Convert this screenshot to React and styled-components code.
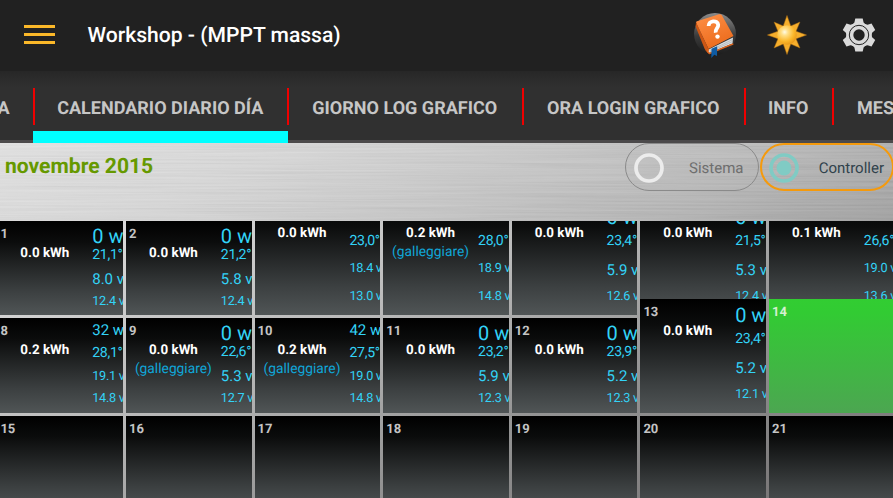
import React from "react";
import styled, { createGlobalStyle } from "styled-components";

const GlobalStyle = createGlobalStyle`
  * { box-sizing: border-box; }
  body { margin: 0; background: #303030; overflow: hidden; text-rendering: geometricPrecision; }
`;

const Screen = styled.main`
  width: 893px;
  height: 498px;
  overflow: hidden;
  display: flex;
  flex-direction: column;
  font-family: Roboto, "Liberation Sans", sans-serif;
`;

const AppBar = styled.header`
  height: 71px;
  flex: none;
  display: flex;
  align-items: center;
  padding: 0 17px 0 24px;
  background: #212121;
`;

const MenuIcon = styled.div`
  width: 31px;
  height: 19px;
  margin-top: -2px;
  display: flex;
  flex-direction: column;
  justify-content: space-between;
`;

const MenuBar = styled.span`
  height: 3px;
  background: #fbb829;
`;

const Title = styled.h1`
  margin: 1px auto 0 32.5px;
  font-size: 21.1px;
  font-weight: 500;
  line-height: 30px;
  color: #fff;
  white-space: nowrap;
`;

const Actions = styled.div`
  display: flex;
  align-items: center;
  margin-top: -1px;
`;

const Action = styled.span`
  display: flex;
  margin-left: ${(p) => p.$gap}px;
`;

const TabBar = styled.nav`
  height: 72px;
  flex: none;
  display: flex;
  border-bottom: 3px solid #4c4a4b;
  background: linear-gradient(#272727, #303030 16px);
`;

const Tab = styled.div`
  width: ${(p) => p.$width}px;
  height: 72px;
  flex: none;
  display: flex;
  flex-direction: column;
  justify-content: space-between;
  padding-top: 17px;
`;

const TabLabel = styled.div`
  height: 37px;
  display: flex;
  align-items: center;
  justify-content: ${(p) => (p.$start ? "flex-start" : p.$first ? "flex-end" : "center")};
  padding: 3px ${(p) => (p.$first ? 23.5 : 1.5)}px 0 ${(p) => (p.$start ? 23 : 0)}px;
  border-left: ${(p) => (p.$first ? "0" : "2px solid #f00000")};
  color: #c6c6c6;
  font-size: 18.05px;
  font-weight: 700;
  white-space: nowrap;
`;

const Indicator = styled.div`
  height: 12px;
  margin-right: -1px;
  background: #00ffff;
`;

const Body = styled.section`
  position: relative;
  flex: 1;
  display: flex;
  flex-direction: column;
  background: linear-gradient(158deg, #e6e6e6 0%, #dadada 18%, #bababa 44%, #929292 68%, #716e6f 100%);
`;

const Grain = styled.svg`
  position: absolute;
  inset: 0;
  width: 100%;
  height: 100%;
  opacity: 0.14;
`;

const MonthRow = styled.div`
  position: relative;
  height: 78px;
  display: flex;
  justify-content: space-between;
  align-items: flex-start;
`;

const Month = styled.h2`
  margin: 10px 0 0 5px;
  font-size: 21.1px;
  font-weight: 700;
  line-height: 28px;
  color: #669900;
`;

const Choices = styled.div`
  display: flex;
  gap: 1px;
  margin-right: -1px;
`;

const Choice = styled.label`
  width: ${(p) => (p.$on ? 134 : 134)}px;
  height: 48px;
  display: flex;
  align-items: center;
  justify-content: space-between;
  padding: 1px ${(p) => (p.$on ? 8 : 14.5)}px 0 ${(p) => (p.$on ? 6.5 : 8)}px;
  border: ${(p) => (p.$on ? "2px solid #f59a0c" : "1px solid #8a8a8a")};
  border-radius: 24px;
  color: ${(p) => (p.$on ? "#30424c" : "#6e6e6e")};
  font-size: 15px;
`;

const Calendar = styled.div`
  position: relative;
  flex: 1;
  overflow: hidden;
  margin-left: -2.6px;
  display: grid;
  grid-template-columns: repeat(7, 125.6px);
  grid-template-rows: 94px 95px 95px;
  gap: 3px;
`;

const Cell = styled.div`
  height: ${(p) => (p.$tall ? "114px" : "100%")};
  align-self: end;
  overflow: hidden;
  display: grid;
  grid-template-columns: 8px 78.8px 1fr;
  background: ${(p) =>
    p.$today
      ? "linear-gradient(#32cd32, #32cb33 12%, #4ca651)"
      : "linear-gradient(#000, #0b0c0c 22%, #3c4041 75%, #505556)"};
`;

const Day = styled.span`
  padding: 6px 0 0 3px;
  font-size: 13px;
  font-weight: 700;
  line-height: 16px;
  color: ${(p) => (p.$today ? "#d3f0cf" : "#c4c4c4")};
`;

const Energy = styled.div`
  display: flex;
  flex-direction: column;
  align-items: center;
  padding-top: 24.5px;
  font-size: 13.4px;
  font-weight: 700;
  line-height: 16px;
  color: #fff;
  white-space: nowrap;
`;

const Floating = styled.span`
  margin-top: 2.5px;
  font-size: 13.8px;
  font-weight: 400;
  color: #10a6d8;
`;

const Readings = styled.div`
  display: flex;
  flex-direction: column;
  align-items: flex-start;
  margin: 1px 0 0 8px;
  color: #33d3f7;
  white-space: nowrap;
`;

const Reading = styled.span`
  height: ${(p) => p.$h}px;
  line-height: ${(p) => p.$h}px;
  font-size: ${(p) => p.$size}px;
  letter-spacing: ${(p) => (p.$size < 14.5 ? -0.28 : 0)}px;
`;

const tabs = [
  ["CALENDARIO DIARIO DÍA", 254, true],
  ["GIORNO LOG GRAFICO", 235],
  ["ORA LOGIN GRAFICO", 222],
  ["INFO", 88],
];

const days = [
  { day: "1", energy: "0.0", watts: "0 w", temp: "21,1°", volts: "8.0 v", battery: "12.4 v" },
  { day: "2", energy: "0.0", watts: "0 w", temp: "21,2°", volts: "5.8 v", battery: "12.4 v" },
  { energy: "0.0", temp: "23,0°", volts: "18.4 v", battery: "13.0 v", tall: true },
  { energy: "0.2", temp: "28,0°", volts: "18.9 v", battery: "14.8 v", tall: true, floating: true },
  { energy: "0.0", watts: "0 w", temp: "23,4°", volts: "5.9 v", battery: "12.6 v", tall: true },
  { energy: "0.0", watts: "0 w", temp: "21,5°", volts: "5.3 v", battery: "12.4 v", tall: true },
  { energy: "0.1", temp: "26,6°", volts: "19.0 v", battery: "13.6 v", tall: true },
  { day: "8", energy: "0.2", watts: "32 w", temp: "28,1°", volts: "19.1 v", battery: "14.8 v" },
  { day: "9", energy: "0.0", watts: "0 w", temp: "22,6°", volts: "5.3 v", battery: "12.7 v", floating: true },
  { day: "10", energy: "0.2", watts: "42 w", temp: "27,5°", volts: "19.0 v", battery: "14.8 v", floating: true },
  { day: "11", energy: "0.0", watts: "0 w", temp: "23,2°", volts: "5.9 v", battery: "12.3 v" },
  { day: "12", energy: "0.0", watts: "0 w", temp: "23,9°", volts: "5.2 v", battery: "12.3 v" },
  { day: "13", energy: "0.0", watts: "0 w", temp: "23,4°", volts: "5.2 v", battery: "12.1 v", tall: true },
];

function RadioIcon({ on }) {
  const color = on ? "#80cbc4" : "#ececec";
  return (
    <svg width="30" height="30" viewBox="0 0 30 30">
      <circle cx="15" cy="15" r="13" fill="none" stroke={color} strokeWidth="3.700" />
      {on && <circle cx="15" cy="15" r="7.500" fill={color} />}
    </svg>
  );
}

function BookIcon() {
  return (
    <svg width="44" height="46" viewBox="0 0 44 46">
      <defs>
        <linearGradient id="disc" x1="0" y1="0" x2="0" y2="1">
          <stop offset="0" stopColor="#8b8b8b" />
          <stop offset="0.55" stopColor="#3a3a3a" />
          <stop offset="1" stopColor="#1d1d1d" />
        </linearGradient>
        <linearGradient id="cover" x1="0" y1="0" x2="0.4" y2="1">
          <stop offset="0" stopColor="#ff9148" />
          <stop offset="1" stopColor="#ec6c1d" />
        </linearGradient>
      </defs>
      <circle cx="22" cy="22" r="21" fill="url(#disc)" />
      <path d="M3 10.500Q3 9.500 4 9.200L26 2.300Q28 1.800 29 3.500L40.500 24 15.500 37Z" fill="url(#cover)" />
      <path d="M3 10 15.500 37 15.500 41.500Q12.500 39.500 11.500 36.500L2.600 14.500Z" fill="#cc5614" />
      <path d="M16 37.300 40 25.500 39.500 31.500 16.500 41Q14 39.500 16 37.300Z" fill="#d8dcde" />
      <path d="M17 38.600 39.700 27.500M17 39.800 39.500 29.500" stroke="#9aa0a3" strokeWidth=".5" />
      <path d="M15.800 37.200Q13.500 40 16.500 41.500L40.300 31.800" stroke="#e0651c" strokeWidth="1.400" fill="none" />
      <path d="M18.500 36.700 24.200 34.200 24 44 21.300 42.700 18.300 46Z" fill="#0e5ba3" />
      <path d="M15.600 14C15.500 8.500 24.500 7.500 25.200 12.700 25.600 16.200 21.800 16.800 22.700 20.600" stroke="#fff" strokeWidth="3.800" fill="none" />
      <circle cx="24.500" cy="24.600" r="2.200" fill="#fff" />
    </svg>
  );
}

const sunPoints = Array.from({ length: 16 }, (_, i) => {
  const a = (i * Math.PI) / 8;
  const r = i % 2 ? 9.8 : i % 4 ? 18.3 : 19.6;
  return `${(20 + r * Math.sin(a)).toFixed(2)},${(20 - r * Math.cos(a)).toFixed(2)}`;
}).join(" ");

function SunIcon() {
  return (
    <svg width="40" height="40" viewBox="0 0 40 40">
      <defs>
        <radialGradient id="sun" cx="0.38" cy="0.35" r="0.68">
          <stop offset="0" stopColor="#fffbe6" />
          <stop offset="0.25" stopColor="#ffe08a" />
          <stop offset="0.7" stopColor="#fbb72a" />
          <stop offset="1" stopColor="#e8981a" />
        </radialGradient>
      </defs>
      <polygon points={sunPoints} fill="#f5ae2c" stroke="#a86a12" strokeWidth=".5" />
      <circle cx="20" cy="20" r="9.800" fill="url(#sun)" />
    </svg>
  );
}

function GearIcon() {
  return (
    <svg width="34" height="34" viewBox="-17 -17 34 34">
      <circle r="12.500" fill="#dadada" />
      {[0, 60, 120, 180, 240, 300].map((a) => (
        <path key={a} transform={`rotate(${a})`} d="M-3.700-16.600H3.700L4.600-12.500 7-10H-7L-4.600-12.500Z" fill="#dadada" />
      ))}
      <circle r="9.700" fill="none" stroke="#242424" strokeWidth="1" />
      <circle r="5.700" fill="#212121" />
    </svg>
  );
}

function Readout({ watts, temp, volts, battery, tall }) {
  const small = watts && watts.length > 3;
  const wide = volts.length > 5;
  const rows = tall
    ? [30, 18, wide ? 38 : 40, wide ? 18 : 14]
    : [small ? 23 : 29, small ? 22 : 9, wide ? 25 : 39, wide ? 20 : 5];
  return (
    <Readings>
      <Reading $size={small ? 15 : 20} $h={rows[0]}>{watts}</Reading>
      <Reading $size={14.1} $h={rows[1]}>{temp}</Reading>
      <Reading $size={wide ? 12.7 : 15} $h={rows[2]}>{volts}</Reading>
      <Reading $size={12.7} $h={rows[3]}>{battery}</Reading>
    </Readings>
  );
}

export default function App() {
  return (
    <Screen>
      <GlobalStyle />
      <AppBar>
        <MenuIcon><MenuBar /><MenuBar /><MenuBar /></MenuIcon>
        <Title>Workshop - (MPPT massa)</Title>
        <Actions>
          <Action $gap={0}><BookIcon /></Action>
          <Action $gap={30}><SunIcon /></Action>
          <Action $gap={35}><GearIcon /></Action>
        </Actions>
      </AppBar>
      <TabBar>
        <Tab $width={33}><TabLabel $first>A</TabLabel></Tab>
        {tabs.map(([label, width, active]) => (
          <Tab key={label} $width={width}>
            <TabLabel>{label}</TabLabel>
            {active && <Indicator />}
          </Tab>
        ))}
        <Tab $width={61}><TabLabel $start>MESE</TabLabel></Tab>
      </TabBar>
      <Body>
        <Grain aria-hidden="true">
          <filter id="brushed" x="0" y="0" width="100%" height="100%">
            <feTurbulence type="fractalNoise" baseFrequency="0.006 0.55" numOctaves="2" seed="4" />
            <feColorMatrix type="saturate" values="0" />
            <feComponentTransfer><feFuncA type="linear" slope="0" intercept="1" /></feComponentTransfer>
          </filter>
          <rect width="100%" height="78" filter="url(#brushed)" />
        </Grain>
        <MonthRow>
          <Month>novembre 2015</Month>
          <Choices>
            <Choice><RadioIcon />Sistema</Choice>
            <Choice $on><RadioIcon on />Controller</Choice>
          </Choices>
        </MonthRow>
        <Calendar>
          {days.map((d, i) => (
            <Cell key={i} $tall={d.tall}>
              <Day>{d.day}</Day>
              <Energy>
                <span>{d.energy} kWh</span>
                {d.floating && <Floating>(galleggiare)</Floating>}
              </Energy>
              <Readout {...d} />
            </Cell>
          ))}
          <Cell $tall $today><Day $today>14</Day></Cell>
          {["15", "16", "17", "18", "19", "20", "21"].map((d) => (
            <Cell key={d}><Day>{d}</Day></Cell>
          ))}
        </Calendar>
      </Body>
    </Screen>
  );
}
